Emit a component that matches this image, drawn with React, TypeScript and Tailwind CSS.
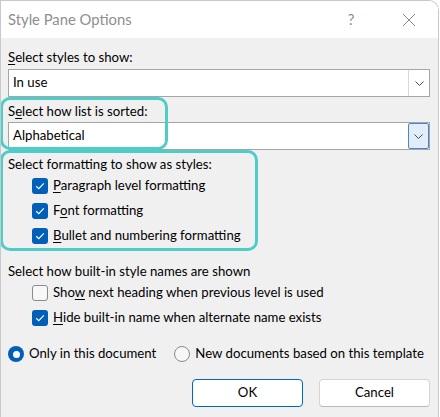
import type { ReactNode } from "react"

const font = { fontFamily: 'Lato, "Noto Sans", sans-serif' }

const Chevron = () => (
  <svg width="9" height="5" viewBox="0 0 9 5" fill="none">
    <path d="M0.5 0.5 L4.5 4.5 L8.5 0.5" stroke="#4a4a4a" strokeWidth="1" />
  </svg>
)

const Check = ({ checked }: { checked: boolean }) =>
  checked ? (
    <span className="w-4 h-4 rounded-[3px] bg-[#005fb8] flex items-center justify-center shrink-0">
      <svg width="10" height="8" viewBox="0 0 10 8" fill="none">
        <path d="M1.2 4.2 L3.8 6.6 L8.8 1.4" stroke="white" strokeWidth="1.2" />
      </svg>
    </span>
  ) : (
    <span className="w-4 h-4 rounded-[3px] bg-[#f7f7f7] border border-[#8a8a8a] shrink-0" />
  )

const Radio = ({ on }: { on: boolean }) =>
  on ? (
    <span className="w-4 h-4 rounded-full bg-[#005fb8] flex items-center justify-center shrink-0">
      <span className="w-[7px] h-[7px] rounded-full bg-white" />
    </span>
  ) : (
    <span className="w-4 h-4 rounded-full bg-[#f7f7f7] border border-[#8a8a8a] shrink-0" />
  )

const Select = ({ value, active }: { value: string; active?: boolean }) => (
  <div className="h-[28px] mr-[8px] bg-white border border-[#a5a5a5] flex items-center">
    <span className="flex-1 pl-[4px] text-black">{value}</span>
    <span
      className={
        active
          ? "w-[21px] h-[26px] bg-[#e1eefa] border border-[#4a86cf] rounded-[2px] flex items-center justify-center"
          : "w-[21px] h-[26px] bg-white border-l border-[#d9d9d9] flex items-center justify-center"
      }
    >
      <Chevron />
    </span>
  </div>
)

const CheckRow = ({ checked, children }: { checked: boolean; children: ReactNode }) => (
  <div className="h-[25px] pl-[24px] flex items-center gap-[5px] whitespace-nowrap">
    <Check checked={checked} />
    <span>{children}</span>
  </div>
)

export default function App() {
  return (
    <div className="w-[440px] h-[417px] bg-white overflow-hidden" style={font}>
      <div className="relative w-[439px] h-[430px] border-l border-t border-r border-[#c9c9c9] rounded-tr-[10px] overflow-hidden">
        {/* Title bar */}
        <div className="h-[37px] bg-white flex items-center pl-[7px]">
          <span className="flex-1 text-[14.8px] text-[#8e8e8e]">Style Pane Options</span>
          <span className="w-[20px] text-center text-[15px] text-[#8e8e8e] mr-[38px]">?</span>
          <span className="w-[20px] flex justify-center mr-[19px]">
            <svg width="14" height="14" viewBox="0 0 14 14">
              <path d="M1 1 L13 13 M13 1 L1 13" stroke="#8a8a8a" strokeWidth="1" />
            </svg>
          </span>
        </div>

        {/* Body */}
        <div className="bg-[#f0f0f0] h-[393px] pl-[7px] pt-[10px] text-[13.2px] text-black">
          <div className="h-[18px] leading-[18px]">
            <span className="underline underline-offset-2">S</span>elect styles to show:
          </div>
          <div className="mt-[3px]">
            <Select value="In use" />
          </div>
          <div className="mt-[5px] h-[18px] leading-[18px]">
            S<span className="underline underline-offset-2">e</span>lect how list is sorted:
          </div>
          <div className="mt-[2px]">
            <Select value="Alphabetical" active />
          </div>
          <div className="mt-[5px] h-[18px] leading-[18px]">Select formatting to show as styles:</div>
          <CheckRow checked>
            <span className="underline underline-offset-2">P</span>aragraph level formatting
          </CheckRow>
          <CheckRow checked>
            F<span className="underline underline-offset-2">o</span>nt formatting
          </CheckRow>
          <CheckRow checked>
            <span className="underline underline-offset-2">B</span>ullet and numbering formatting
          </CheckRow>

          <div className="mt-[14px] h-[18px] leading-[18px]">Select how built-in style names are shown</div>
          <CheckRow checked={false}>
            Sho<span className="underline underline-offset-2">w</span> next heading when previous level is used
          </CheckRow>
          <CheckRow checked>
            <span className="underline underline-offset-2">H</span>ide built-in name when alternate name exists
          </CheckRow>

          <div className="mt-[15px] h-[18px] flex items-center whitespace-nowrap">
            <span className="flex items-center gap-[5px]">
              <Radio on />
              <span>Only in this document</span>
            </span>
            <span className="ml-[18px] flex items-center gap-[5px]">
              <Radio on={false} />
              <span>New documents based on this template</span>
            </span>
          </div>

          <div className="mt-[16px] flex justify-end gap-[16px] pr-[8px]">
            <button className="w-[111px] h-[28px] bg-white border border-[#0067c0] rounded-[4px] text-black">
              OK
            </button>
            <button className="w-[111px] h-[28px] bg-white border border-[#d4d4d4] border-b-[#b8b8b8] rounded-[4px] text-black">
              Cancel
            </button>
          </div>
        </div>

        {/* Annotation highlights */}
        <div className="absolute left-[-1px] top-[96px] w-[168px] h-[53px] border-[3px] border-[#4ecdc8] rounded-[10px] pointer-events-none" />
        <div className="absolute left-[-1px] top-[149px] w-[258px] h-[101px] border-[3px] border-[#4ecdc8] rounded-[10px] pointer-events-none" />
      </div>
    </div>
  )
}
